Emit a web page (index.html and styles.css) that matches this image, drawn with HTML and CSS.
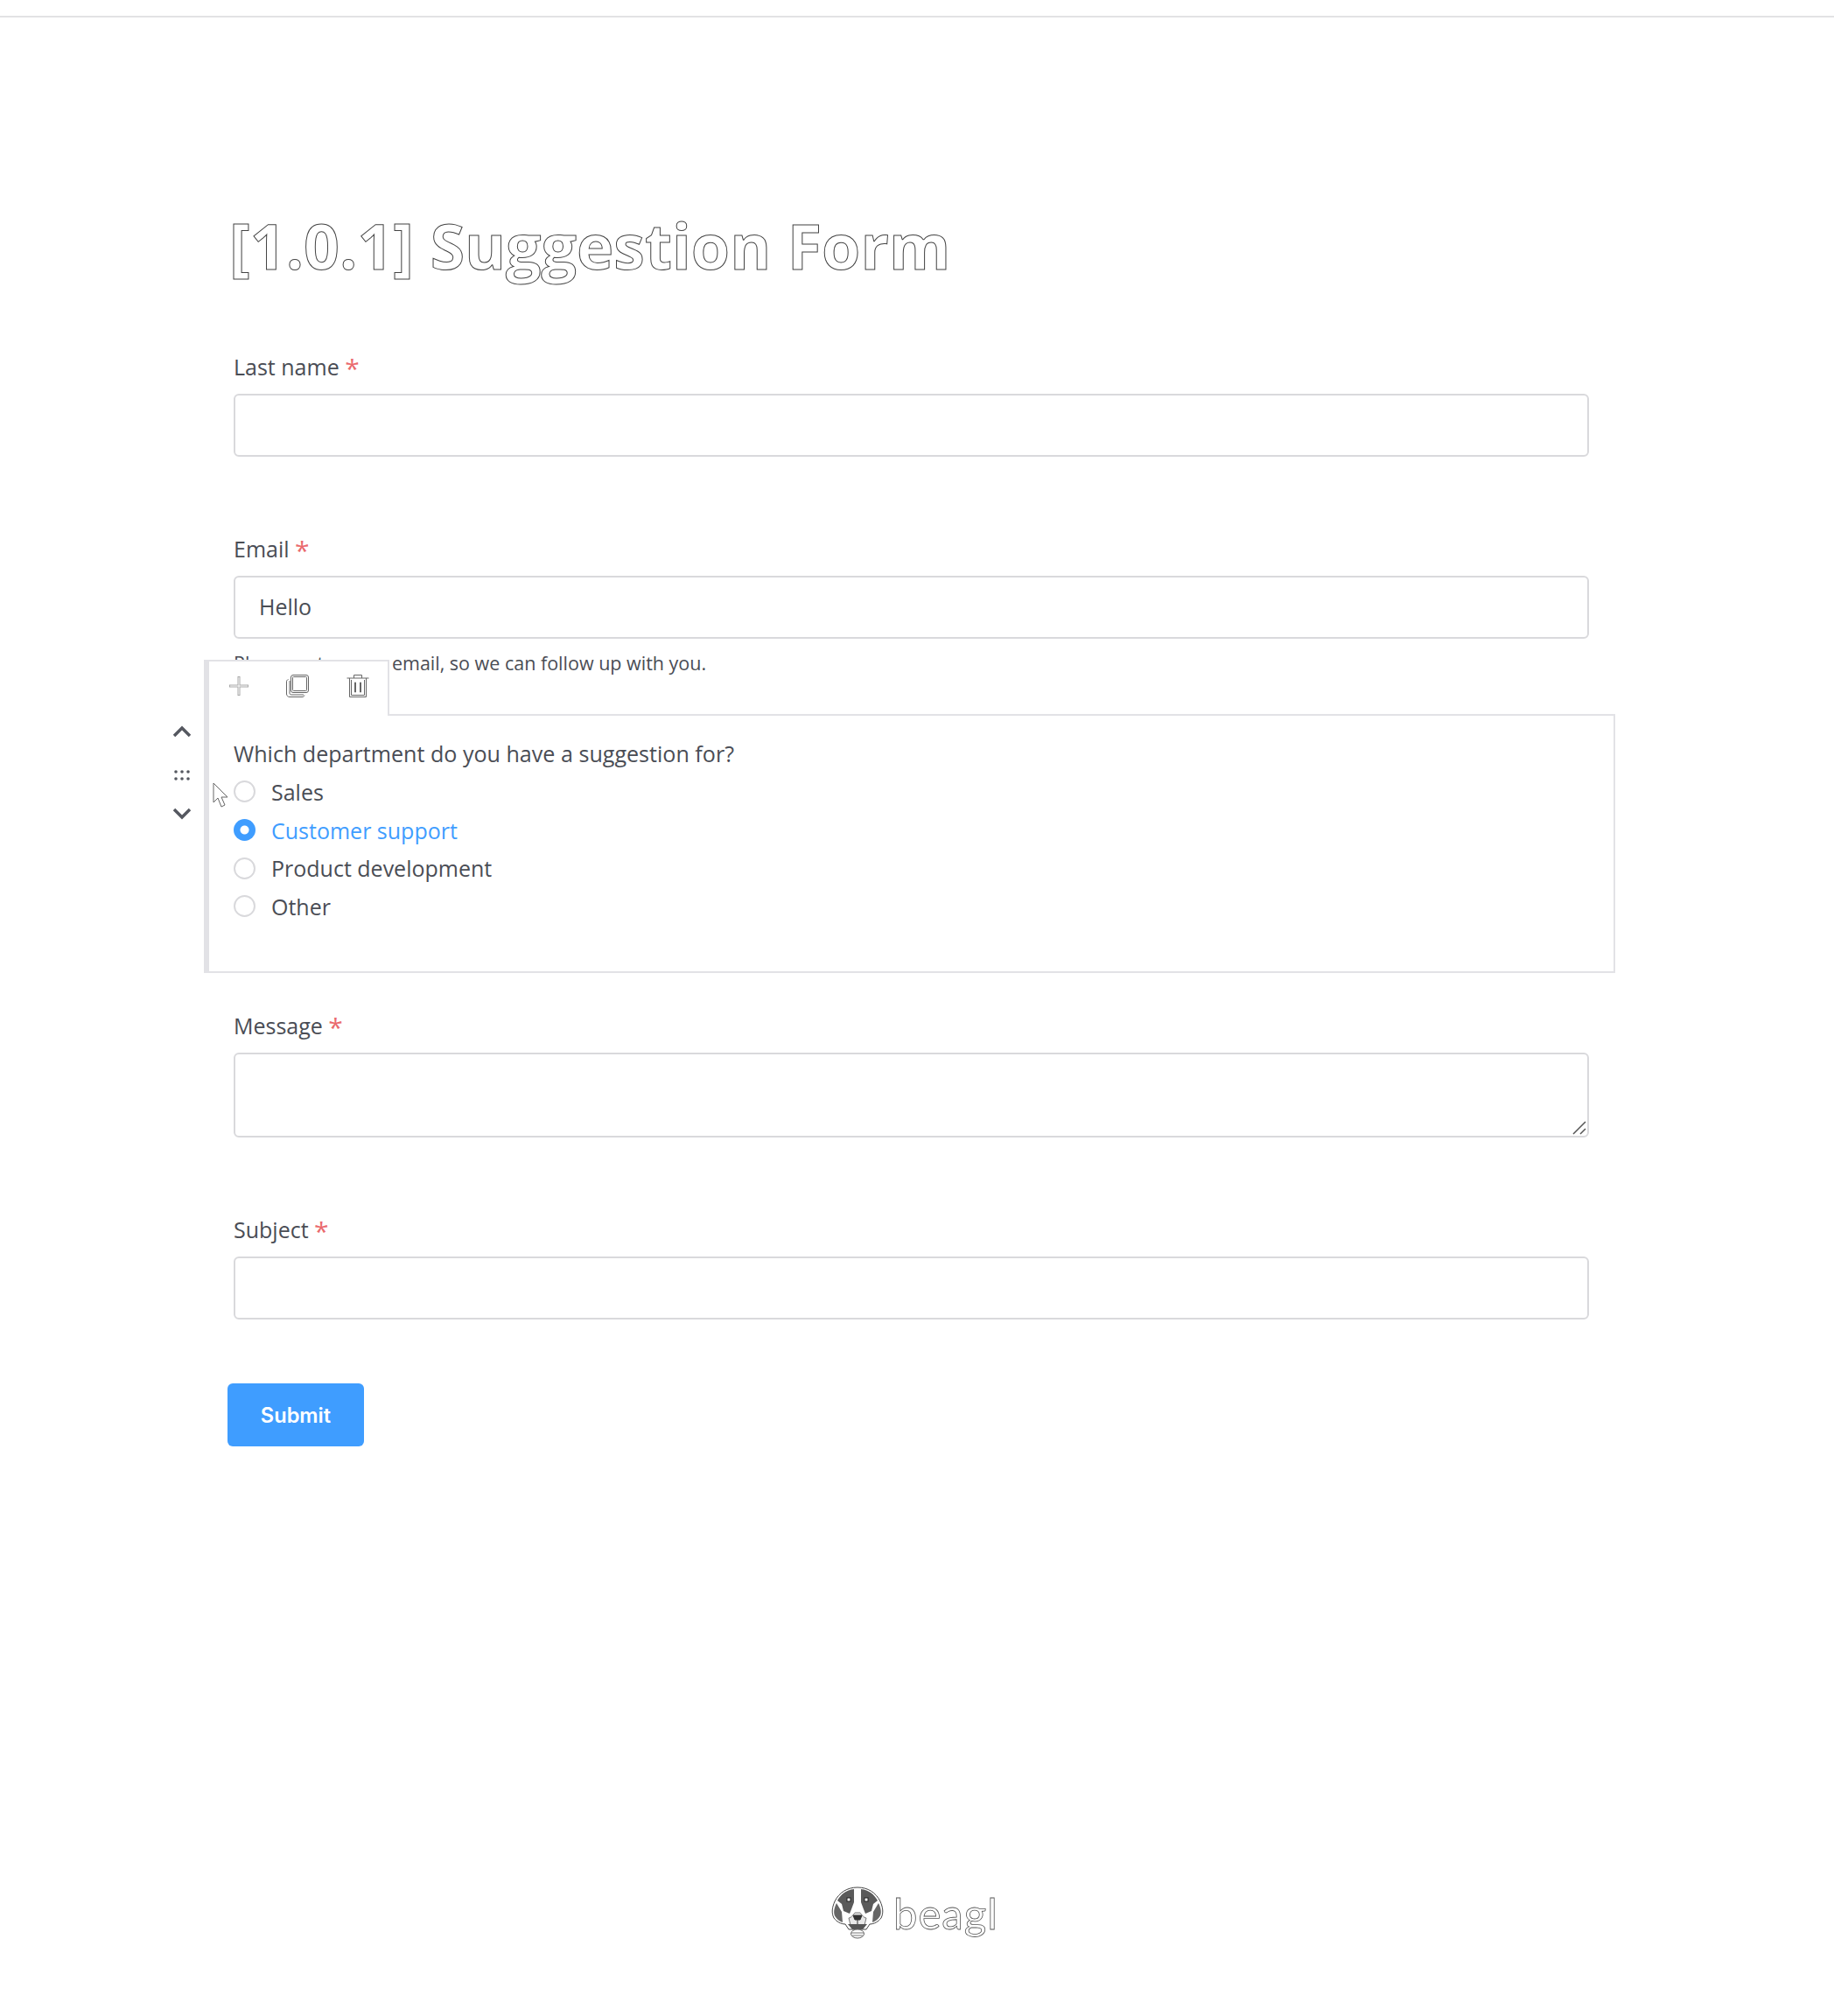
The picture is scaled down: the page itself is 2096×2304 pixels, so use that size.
FILE: index.html
```html
<!DOCTYPE html>
<html lang="en">
<head>
<meta charset="utf-8">
<title>[1.0.1] Suggestion Form</title>
<link rel="stylesheet" href="styles.css">
</head>
<body>
<div class="topline"></div>
<main class="form">
  <h1 class="title">[1.0.1] Suggestion Form</h1>
  <div class="field first">
    <label class="label">Last name <span class="req">*</span></label>
    <div class="input"></div>
  </div>
  <div class="field email">
    <label class="label">Email <span class="req">*</span></label>
    <div class="input">Hello</div>
    <p class="help">Please enter your email, so we can follow up with you.</p>
  </div>
  <section class="selected">
    <div class="toolbar">
      <svg class="tool" width="24" height="24" viewBox="0 0 24 24"><path class="plus-o" d="M12 1v22M1 12h22"/><path class="plus-i" d="M12 2v20M2 12h20"/></svg>
      <svg class="tool" width="28" height="28" viewBox="0 0 28 28"><rect class="line" x="6.500" y="1.500" width="20" height="20" rx="2.500"/><rect class="line" x="8.500" y="3.500" width="16" height="16" rx="1"/><path class="line" d="M3.500 6.500C2 7 1.500 8 1.500 9v14c0 2 1.500 3.500 3.500 3.500h14c1.500 0 2.500-.5 3-2M5 8v14c0 1 .6 2 2 2h14"/></svg>
      <svg class="tool" width="28" height="28" viewBox="0 0 28 28"><path class="line" d="M1.500 5h25M9.500 5V1.500h9V5M4.500 5v21.500h19V5M6.500 7v17.500h15V7"/><path class="line" d="M11.500 10h-1v11h1zM17.500 10h-1v11h1z"/></svg>
    </div>
    <div class="mover">
      <svg width="22" height="14" viewBox="0 0 22 14"><path class="chev" d="M2 12l9-9 9 9"/></svg>
      <svg class="grip" width="20" height="14" viewBox="0 0 20 14"><g class="dots"><circle cx="3" cy="3" r="1.800"/><circle cx="10" cy="3" r="1.800"/><circle cx="17" cy="3" r="1.800"/><circle cx="3" cy="11" r="1.800"/><circle cx="10" cy="11" r="1.800"/><circle cx="17" cy="11" r="1.800"/></g></svg>
      <svg width="22" height="14" viewBox="0 0 22 14"><path class="chev" d="M2 2l9 9 9-9"/></svg>
    </div>
    <svg class="cursor" width="20" height="32" viewBox="0 0 20 32"><path d="M1 1v22l5-5 4 10 4-2-4-9h7z" fill="#fff" stroke="#666" stroke-width="1"/></svg>
    <p class="question">Which department do you have a suggestion for?</p>
    <ul class="options">
      <li class="option"><span class="radio"></span>Sales</li>
      <li class="option checked"><span class="radio"></span>Customer support</li>
      <li class="option"><span class="radio"></span>Product development</li>
      <li class="option"><span class="radio"></span>Other</li>
    </ul>
  </section>
  <div class="field message">
    <label class="label">Message <span class="req">*</span></label>
    <div class="input area">
      <svg class="grab" width="16" height="16" viewBox="0 0 16 16"><path d="M1 15L15 1M9 15l6-6" stroke="#555" stroke-width="1.500" fill="none"/></svg>
    </div>
  </div>
  <div class="field subject">
    <label class="label">Subject <span class="req">*</span></label>
    <div class="input"></div>
  </div>
  <button class="submit" type="button">Submit</button>
</main>
<footer class="brand">
  <svg width="60" height="60" viewBox="0 0 60 60">
    <path d="M30 1C18 1 9 7 4 17 1 24 0 30 3 36c3 4 8 7 13 7l4 6h20l4-6c5 0 10-3 13-7 3-6 2-12-1-19C51 7 42 1 30 1z" fill="#fff" stroke="#444" stroke-width="1"/>
    <path d="M26 3C17 4 11 9 7 16l5 4 2 8 7 3 2-5 3-8zM34 3c9 1 15 6 19 13l-5 4-2 8-7 3-2-5-3-8z" fill="#5a5a5a"/>
    <path d="M6 19C3 25 2 31 5 35c2 3 5 5 8 6l-1-12zM54 19c3 6 4 12 1 16-2 3-5 5-8 6l1-12z" fill="#666"/>
    <path d="M20 36c3 0 5-4 7-6h6c2 2 4 6 7 6l-2 8-8 4-8-4z" fill="#e8e8e8" stroke="#777"/>
    <path d="M25 33h10l-2 5h-6zM30 38v5" fill="#333" stroke="#333"/>
    <path d="M19 43l22 0-5 6H24z" fill="#555"/>
    <rect x="18" y="13" width="4" height="4" fill="#fff" stroke="#222"/>
    <rect x="38" y="13" width="4" height="4" fill="#fff" stroke="#222"/>
    <ellipse cx="30" cy="54" rx="7.500" ry="5" fill="#fff" stroke="#666"/>
    <path d="M23 53h14M24 56h12" stroke="#777"/>
  </svg>
  <span class="word">beagl</span>
</footer>
</body>
</html>
```
FILE: styles.css
```css
* { box-sizing: border-box; }
html, body { margin: 0; padding: 0; background: #fff; }
body { height: 2304px; font-family: "Open Sans", sans-serif; color: #4a4d55; font-size: 25px; position: relative; }
.topline { height: 20px; border-bottom: 2px solid #e2e2e4; }
.form { width: 1549px; margin-left: 267px; }
.title { margin: 0 0 0 -5px; padding-top: 212px; font-size: 71.600px; line-height: 96px; font-weight: 700; color: #fff; -webkit-text-stroke: 1px #444; height: 311px; white-space: nowrap; }
.field { display: flex; flex-direction: column; }
.first { margin-top: 70px; }
.email { margin-top: 87px; position: relative; }
.message { margin-top: 42px; }
.subject { margin-top: 87px; }
.label { display: block; line-height: 36px; height: 36px; margin-bottom: 13px; }
.req { color: #ea6a6e; font-size: 30px; line-height: 30px; vertical-align: -3px; }
.input { height: 72px; border: 2px solid #d9d9dc; border-radius: 6px; padding: 0 27px; line-height: 66px; position: relative; color: #4a4d55; }
.area { height: 97px; }
.grab { position: absolute; right: 1px; bottom: 1px; }
.help { margin: 12px 0 0; font-size: 21.500px; line-height: 32px; height: 32px; color: #4a4d55; }
.selected { position: relative; margin: 42px -30px 0 -34px; height: 296px; border: 2px solid #e2e2e6; border-left-width: 6px; padding: 25px 0 0 28px; background: #fff; }
.toolbar { position: absolute; left: -6px; top: -64px; width: 212px; height: 64px; display: flex; align-items: center; gap: 41px; padding: 0 0 6px 22px; background: #fff; border: 2px solid #e2e2e6; border-left-width: 6px; border-bottom: 0; }
.tool { flex: none; }
.plus-o { stroke: #a8a8a8; stroke-width: 3; fill: none; }
.plus-i { stroke: #fff; stroke-width: 1; fill: none; }
.line { stroke: #666; stroke-width: 1; fill: none; }
.mover { position: absolute; left: -42px; top: 11px; width: 22px; display: flex; flex-direction: column; align-items: center; gap: 30px; }
.chev { stroke: #555860; stroke-width: 3.500; fill: none; }
.dots { fill: #555860; }
.grip { height: 14px; margin-top: 6px; }
.cursor { position: absolute; left: 4px; top: 76px; }
.question { margin: 0; line-height: 36px; height: 36px; font-size: 25.100px; }
.options { list-style: none; margin: 4px 0 0; padding: 0; display: flex; flex-direction: column; }
.option { display: flex; align-items: center; height: 43.700px; line-height: 34px; }
.radio { width: 25px; height: 25px; border: 2px solid #d9d9dc; border-radius: 50%; margin-right: 18px; background: #fff; flex: none; }
.checked { color: #3f9dff; }
.checked .radio { border: 0; background: radial-gradient(circle, #fff 0 4.500px, #3f9dff 5.500px); }
.submit { display: block; margin: 73px 0 0 -7px; width: 156px; height: 72px; border: 0; border-radius: 6px; background: #3f9dff; color: #fff; font-family: Inter, sans-serif; font-size: 23.600px; font-weight: 600; }
.brand { position: absolute; left: 950px; top: 2156px; display: flex; align-items: center; gap: 11px; }
.word { font-family: Lato, sans-serif; font-weight: 400; font-size: 49px; line-height: 60px; color: #fff; -webkit-text-stroke: 0.800px #555; letter-spacing: 1px; }
```
